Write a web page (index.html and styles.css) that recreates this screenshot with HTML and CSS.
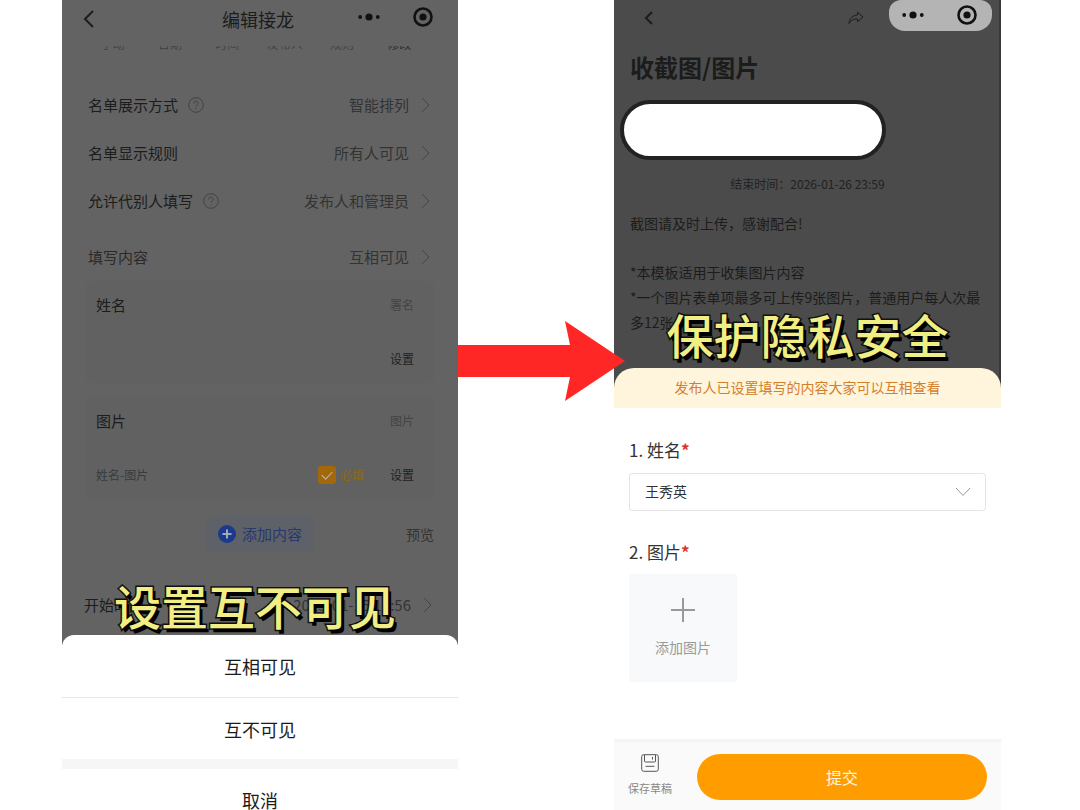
FILE: index.html
```html
<!DOCTYPE html>
<html lang="zh-CN">
<head>
  <meta charset="UTF-8">
  <meta name="viewport" content="width=device-width, initial-scale=1">
  <title>编辑接龙</title>
  <link rel="stylesheet" href="styles.css">
</head>
<body>

  <svg class="defs" aria-hidden="true">
    <symbol id="next" viewBox="0 0 9 16"><path d="M1 1l7 7-7 7"/></symbol>
    <symbol id="help" viewBox="0 0 16 16"><circle cx="8" cy="8" r="7.3"/><path d="M5.8 6.4a2.2 2.2 0 1 1 3.2 1.9c-.7.4-1 .7-1 1.4M8 11.2v1"/></symbol>
    <symbol id="dots" viewBox="0 0 22 8"><circle cx="2.2" cy="4" r="1.9"/><circle cx="11" cy="4" r="3.6"/><circle cx="19.8" cy="4" r="1.9"/></symbol>
    <symbol id="target" viewBox="0 0 20 20"><circle cx="10" cy="10" r="8.5" fill="none" stroke="currentColor" stroke-width="2.6"/><circle cx="10" cy="10" r="3.6"/></symbol>
  </svg>

  <div class="container">

    <div class="phone edit">
      <header class="topbar">
        <button class="back" aria-label="返回"><svg width="12" height="18" viewBox="0 0 12 18"><path d="M10 1L2 9l8 8"/></svg></button>
        <h1>编辑接龙</h1>
        <div class="menu">
          <svg class="solid" width="22" height="8"><use href="#dots"/></svg>
          <svg class="solid" width="20" height="20"><use href="#target"/></svg>
        </div>
      </header>

      <div class="tabs">
        <span>手动</span><span>日期</span><span>时间</span><span>发布人</span><span>规则</span><span class="active">修改</span>
      </div>

      <div class="rows">
        <button class="row"><span>名单展示方式</span><svg class="help"><use href="#help"/></svg><span class="value">智能排列</span><svg class="next"><use href="#next"/></svg></button>
        <button class="row"><span>名单显示规则</span><span class="value">所有人可见</span><svg class="next"><use href="#next"/></svg></button>
        <button class="row"><span>允许代别人填写</span><svg class="help"><use href="#help"/></svg><span class="value">发布人和管理员</span><svg class="next"><use href="#next"/></svg></button>
      </div>

      <button class="row content-row"><span>填写内容</span><span class="value">互相可见</span><svg class="next"><use href="#next"/></svg></button>

      <div class="card">
        <div class="card-row"><h2>姓名</h2><span class="tag">署名</span></div>
        <div class="card-row"><button class="set">设置</button></div>
      </div>
      <div class="card">
        <div class="card-row"><h2>图片</h2><span class="tag">图片</span></div>
        <div class="card-row">
          <span class="note">姓名-图片</span>
          <label class="required"><input type="checkbox" checked>必填</label>
          <button class="set">设置</button>
        </div>
      </div>

      <div class="actions">
        <button class="add">
          <svg width="18" height="18" viewBox="0 0 18 18"><circle cx="9" cy="9" r="9"/><path d="M9 4.5v9M4.5 9h9"/></svg>
          添加内容
        </button>
        <button class="preview">预览</button>
      </div>

      <button class="row date-row"><span>开始时间</span><span class="value">2025-01-15 18:56</span><svg class="next"><use href="#next"/></svg></button>

      <div class="sheet">
        <p class="caption">设置互不可见</p>
        <button>互相可见</button>
        <button>互不可见</button>
        <button class="cancel">取消</button>
      </div>
    </div>

    <svg class="arrow" viewBox="0 0 167 80" aria-hidden="true"><path d="M0 24h112L107 0l60 40-60 40 5-24H0z"/></svg>

    <div class="phone fill">
      <div class="intro">
        <header class="topbar">
          <button class="back" aria-label="返回"><svg width="9" height="14" viewBox="0 0 9 14"><path d="M8 1L2 7l6 6"/></svg></button>
          <button class="share" aria-label="分享"><svg width="16" height="14" viewBox="0 0 16 14"><path d="M9.5 1.2L15 6l-5.500 4.800V8C6 7.600 3 9 1 12.500 1.500 7.500 4.500 4.300 9.500 4z"/></svg></button>
          <div class="menu">
            <svg class="solid" width="22" height="8"><use href="#dots"/></svg>
            <svg class="solid" width="20" height="20"><use href="#target"/></svg>
          </div>
        </header>
        <h1>收截图/图片</h1>
        <div class="mask"></div>
        <p class="deadline">结束时间：2026-01-26 23:59</p>
        <div class="desc">
          <p>截图请及时上传，感谢配合!</p>
          <p>*本模板适用于收集图片内容<br>*一个图片表单项最多可上传9张图片，普通用户每人次最多12张</p>
        </div>
        <div class="notice">
          <p class="caption">保护隐私安全</p>
          发布人已设置填写的内容大家可以互相查看
        </div>
      </div>

      <form class="fields">
        <label class="field-name" for="name">1. 姓名<b>*</b></label>
        <div class="select">
          <select id="name"><option>王秀英</option></select>
          <svg width="16" height="10" viewBox="0 0 16 10"><path d="M1 1l7 7.500L15 1"/></svg>
        </div>
        <label class="field-name" for="photo">2. 图片<b>*</b></label>
        <button type="button" class="upload" id="photo">
          <svg width="24" height="24" viewBox="0 0 24 24"><path d="M12 0v24M0 12h24"/></svg>
          添加图片
        </button>
      </form>

      <footer class="bottom">
        <button class="draft">
          <svg width="18" height="18" viewBox="0 0 18 18"><rect x=".7" y=".7" width="16.600" height="16.600" rx="2"/><path d="M3.500 1v6a1 1 0 0 0 1 1h9a1 1 0 0 0 1-1V1M11.500 3v2.500M4.500 12.300h9"/></svg>
          保存草稿
        </button>
        <button class="submit">提交</button>
      </footer>
    </div>

  </div>

</body>
</html>
```

FILE: styles.css
```css
* {
  box-sizing: border-box;
}

body {
  margin: 0;
  background: #fff;
  color: #1c1c1c;
  font-family: "Noto Sans CJK SC", "Noto Sans", sans-serif;
  font-size: 15px;
  line-height: 20px;
}

h1, h2, p {
  margin: 0;
  font-weight: 400;
}

button {
  padding: 0;
  border: none;
  background: none;
  color: inherit;
  font: inherit;
  cursor: pointer;
}

svg {
  display: block;
  flex: none;
  fill: none;
  stroke: currentColor;
}

.defs {
  position: absolute;
  width: 0;
  height: 0;
}

.solid {
  fill: currentColor;
  stroke: none;
}

.container {
  display: grid;
  grid-template-columns: 396fr 156fr 387fr;
  min-height: 100vh;
  padding: 0 79px 0 62px;
}

.phone {
  display: flex;
  flex-direction: column;
}

.menu {
  display: flex;
  align-items: center;
  justify-content: flex-end;
  gap: 33px;
  color: #111;
}

.caption {
  position: absolute;
  right: 0;
  bottom: 100%;
  left: 0;
  padding-bottom: 6px;
  color: #f1ee84;
  font-size: 47px;
  font-weight: 500;
  line-height: 56px;
  text-align: center;
  white-space: nowrap;
  -webkit-text-stroke: 3px #111;
  paint-order: stroke fill;
  text-shadow: 3px 4px 0 #000;
}

/* left screen */
.edit {
  background: #636363;
}

.edit .topbar {
  display: grid;
  grid-template-columns: 1fr auto 1fr;
  align-items: center;
  height: 38px;
  padding: 0 25px 0 21px;
}

.edit .topbar h1 {
  font-size: 18px;
}

.edit .menu {
  padding-bottom: 4px;
}

.back {
  justify-self: start;
}

.edit .back svg {
  stroke-width: 2;
}

.tabs {
  display: flex;
  align-items: flex-end;
  height: 5px;
  margin: 8px 30px 30px 22px;
  overflow: hidden;
  color: #444;
  font-size: 12px;
  line-height: 14px;
}

.tabs span {
  flex: 1;
  text-align: center;
}

.tabs .active {
  color: #2b3040;
}

.row {
  display: flex;
  align-items: center;
  width: 100%;
  height: 48px;
  padding: 0 28px 0 26px;
}

.value {
  margin-left: auto;
  color: #333;
}

.help {
  width: 16px;
  height: 16px;
  margin-left: 10px;
  color: #444;
}

.next {
  width: 9px;
  height: 16px;
  margin-left: 12px;
  color: #444;
}

.content-row {
  margin-top: 8px;
  color: #2a2a2a;
}

.card {
  margin: 0 24px 14px;
  padding: 9px 20px 9px 10px;
  border-radius: 6px;
  background: #616161;
  font-size: 12px;
}

.card-row {
  display: flex;
  align-items: center;
  height: 30px;
}

.card-row + .card-row {
  margin-top: 24px;
}

.card h2 {
  font-size: 15px;
}

.tag {
  margin-left: auto;
  color: #444;
}

.set {
  margin-left: auto;
  color: #222;
}

.note {
  color: #353c40;
}

.required {
  display: flex;
  align-items: center;
  gap: 4px;
  margin-left: auto;
  color: #8f6a10;
}

.required + .set {
  margin-left: 26px;
}

.required input {
  display: grid;
  place-items: center;
  width: 18px;
  height: 18px;
  margin: 0;
  border-radius: 3px;
  background: #a3680a;
  appearance: none;
}

.required input::before {
  content: "";
  width: 9px;
  height: 5px;
  margin-bottom: 3px;
  border: solid #bbb;
  border-width: 0 0 1px 1px;
  transform: rotate(-45deg);
}

.actions {
  display: grid;
  grid-template-columns: 1fr auto 1fr;
  align-items: center;
  margin: 3px 24px 0;
}

.add {
  display: flex;
  grid-column: 2;
  align-items: center;
  gap: 6px;
  height: 36px;
  padding: 0 12px;
  border-radius: 6px;
  background: #5e6168;
  color: #26386f;
}

.add circle {
  fill: #1c3a8c;
  stroke: none;
}

.add path {
  stroke: #a5a9b5;
  stroke-width: 2;
}

.preview {
  justify-self: end;
  color: #333;
  font-size: 14px;
}

.date-row {
  margin-top: 29px;
  padding: 0 26px 0 22px;
}

.sheet {
  position: relative;
  display: flex;
  flex: 1;
  flex-direction: column;
  margin-top: 6px;
  border-radius: 12px 12px 0 0;
  background: #fff;
  font-size: 18px;
}

.sheet .caption {
  padding: 0 10px 2px 0;
}

.sheet button {
  height: 62px;
}

.sheet button + button {
  border-top: 1px solid #e6e6e6;
}

.sheet button.cancel {
  height: 51px;
  padding-top: 20px;
  border-top: 10px solid #f6f6f6;
}

.arrow {
  position: relative;
  width: calc(100% + 11px);
  margin-top: 321px;
  fill: #ff2626;
  stroke: none;
}

/* right screen */
.intro {
  background: #4b4b4b;
  box-shadow: inset -2px 0 #383838;
}

.fill .topbar {
  display: flex;
  align-items: flex-start;
  height: 31px;
  padding: 0 9px 0 30px;
}

.fill .back {
  margin-top: 11px;
}

.share {
  margin: 11px 25px 0 auto;
}

.fill .back svg {
  stroke-width: 2;
}

.fill .menu {
  width: 103px;
  height: 31px;
  padding: 0 15px 2px;
  border-radius: 12px 12px 16px 16px;
  background: #b4b4b4;
}

.intro h1 {
  margin: 20px 16px 0;
  font-size: 24px;
  font-weight: 700;
  line-height: 32px;
}

.mask {
  width: 266px;
  height: 60px;
  margin: 17px 6px 0;
  border: 4px solid #222;
  border-radius: 30px;
  background: #fff;
}

.deadline {
  margin-top: 14px;
  color: #222;
  font-size: 12px;
  text-align: center;
}

.desc {
  height: 174px;
  padding: 17px 16px 0;
  font-size: 14px;
  line-height: 25px;
}

.desc p + p {
  margin-top: 24px;
}

.notice {
  position: relative;
  padding: 9px 0 11px;
  border-radius: 20px 20px 0 0;
  background: #fff4dc;
  color: #d47f2c;
  font-size: 14px;
  text-align: center;
}

.fields {
  display: flex;
  flex: 1;
  flex-direction: column;
  align-items: flex-start;
  padding: 32px 15px;
  color: #333;
}

.field-name {
  font-size: 17px;
}

.field-name b {
  color: #d33;
}

.select {
  position: relative;
  width: 100%;
  margin: 13px 0 31px;
}

.select select {
  display: block;
  width: 100%;
  height: 38px;
  padding: 0 15px 2px;
  border: 1px solid #e4e4e4;
  border-radius: 3px;
  background: #fff;
  color: #333;
  font: inherit;
  font-size: 14px;
  appearance: none;
}

.select svg {
  position: absolute;
  top: 14px;
  right: 15px;
  color: #999;
}

.upload {
  display: flex;
  flex-direction: column;
  align-items: center;
  gap: 15px;
  width: 108px;
  height: 108px;
  margin-top: 12px;
  padding-top: 24px;
  border-radius: 3px;
  background: #f7f9fa;
  color: #999;
  font-size: 14px;
}

.upload svg {
  stroke-width: 2;
}

.bottom {
  display: flex;
  gap: 25px;
  padding: 12px 14px 10px;
  border-top: 3px solid #f4f4f4;
  background: #fafafa;
}

.draft {
  display: flex;
  flex-direction: column;
  align-items: center;
  justify-content: flex-start;
  gap: 6px;
  height: 42px;
  color: #888;
  font-size: 11px;
}

.draft svg {
  color: #555;
}

.submit {
  flex: 1;
  height: 46px;
  border-radius: 23px;
  background: #ff9d00;
  color: #fff6e0;
  font-size: 16px;
}
```
